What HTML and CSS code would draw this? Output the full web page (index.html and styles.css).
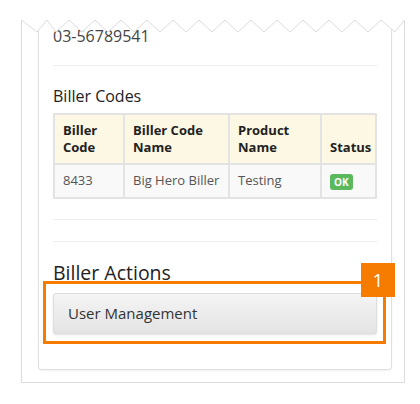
FILE: index.html
```html
<!DOCTYPE html>
<html lang="en">
<head>
    <meta charset="UTF-8">
    <meta name="viewport" content="width=device-width, initial-scale=1.0">
    <title>Biller</title>
    <link rel="stylesheet" href="styles.css">
</head>
<body>

    <div class="paper">
        <!-- torn top edge -->
        <svg class="torn" width="384" height="20" viewBox="0 0 384 20">
            <polygon fill="#fff" points="0,0 384,0 384,2 374,14 360,2 347,14 334,2 321,14 308,2 295,14 282,2 269,14 256,2 243,14 230,2 217,14 204,2 191,14 178,2 165,14 152,2 139,14 126,2 113,14 100,2 87,14 74,2 61,14 48,2 35,14 26,2 16,14 1,2 0,2"/>
            <polyline fill="none" stroke="#dcdcdc" stroke-width="1" points="0.5,2 16,14 26,2 35,14 48,2 61,14 74,2 87,14 100,2 113,14 126,2 139,14 152,2 165,14 178,2 191,14 204,2 217,14 230,2 243,14 256,2 269,14 282,2 295,14 308,2 321,14 334,2 347,14 360,2 374,14 383.5,2"/>
        </svg>

        <div class="card">
            <p class="phone">03-56789541</p>
            <hr>

            <h4>Biller Codes</h4>
            <table class="codes">
                <thead>
                    <tr>
                        <th class="c1">Biller<br>Code</th>
                        <th class="c2">Biller Code<br>Name</th>
                        <th class="c3">Product<br>Name</th>
                        <th class="c4">Status</th>
                    </tr>
                </thead>
                <tbody>
                    <tr>
                        <td>8433</td>
                        <td>Big Hero Biller</td>
                        <td>Testing</td>
                        <td><span class="ok">OK</span></td>
                    </tr>
                </tbody>
            </table>
            <hr>
            <hr class="second">

            <div class="actions">
                <h3>Biller Actions</h3>
                <div class="btn-wrap">
                    <button>User Management</button>
                    <div class="mark"></div>
                    <div class="mark-num">1</div>
                </div>
            </div>
        </div>
    </div>

</body>
</html>
```

FILE: styles.css
```css
*{
    margin: 0;
    padding: 0;
    box-sizing: border-box;
}

body {
    background-color: #fff;
    font-family: "Open Sans", "Liberation Sans", sans-serif;
    color: #333;
    width: 420px;
    height: 404px;
    overflow: hidden;
}

.paper{
    position: relative;
    margin: 18px 0 0 21px;
    width: 384px;
    border: 1px solid #dcdcdc;
    border-top: none;
    padding: 0 12px 12px 16px;
}

.torn{
    position: absolute;
    top: 0;
    left: -1px;
    z-index: 2;
}

.card{
    border: 1px solid #e0e0e0;
    border-top: none;
    border-radius: 0 0 4px 4px;
    box-shadow: 0 1px 2px rgba(0, 0, 0, 0.06);
    padding: 7px 14px 35px 14px;
}

.phone{
    font-size: 16px;
    line-height: 22px;
    color: #444;
}

hr{
    border: none;
    border-top: 1px solid #eee;
    margin: 20px 0 20px 0;
}

.phone + hr{
    margin-top: 18px;
}

hr.second{
    margin-top: 21px;
    margin-bottom: 21px;
}

h4{
    font-size: 16px;
    font-weight: 500;
    line-height: 20px;
    color: #222;
    margin-bottom: 7px;
}

.codes{
    width: 100%;
    table-layout: fixed;
    border-collapse: collapse;
    font-size: 13px;
    line-height: 17px;
}

.codes th, .codes td{
    border: 2px solid #e3e3e3;
    padding: 7px 8px;
    text-align: left;
}

.codes th{
    background-color: #fcf8e3;
    font-weight: 700;
    color: #222;
    vertical-align: bottom;
}

.codes td{
    background-color: #f9f9f9;
    color: #555;
    white-space: nowrap;
}

.c1{ width: 70px; }
.c2{ width: 105px; }
.c3{ width: 92px; }

.ok{
    display: inline-block;
    background-color: #5cb85c;
    color: #fff;
    font-size: 10px;
    font-weight: 700;
    line-height: 16px;
    padding: 0 4px;
    border-radius: 3px;
    vertical-align: middle;
}

h3{
    font-size: 19.5px;
    font-weight: 500;
    line-height: 20px;
    color: #222;
    margin-bottom: 10px;
}

.btn-wrap{
    position: relative;
}

button{
    display: block;
    width: 100%;
    text-align: left;
    font-family: inherit;
    font-size: 15px;
    line-height: 21px;
    color: #333;
    padding: 9px 14px;
    border: 1px solid #dedede;
    border-radius: 3px;
    background-image: linear-gradient(to bottom, #f4f4f4, #e4e4e4);
    box-shadow: 0 1px 2px rgba(0, 0, 0, 0.12);
}

.mark{
    position: absolute;
    left: -10px;
    right: -9px;
    top: -12px;
    bottom: -10px;
    border: 3px solid #f57c00;
}

.mark-num{
    position: absolute;
    right: -18px;
    top: -30px;
    width: 34px;
    height: 34px;
    background-color: #f57c00;
    color: #fff;
    font-size: 19px;
    line-height: 34px;
    text-align: center;
}
```
